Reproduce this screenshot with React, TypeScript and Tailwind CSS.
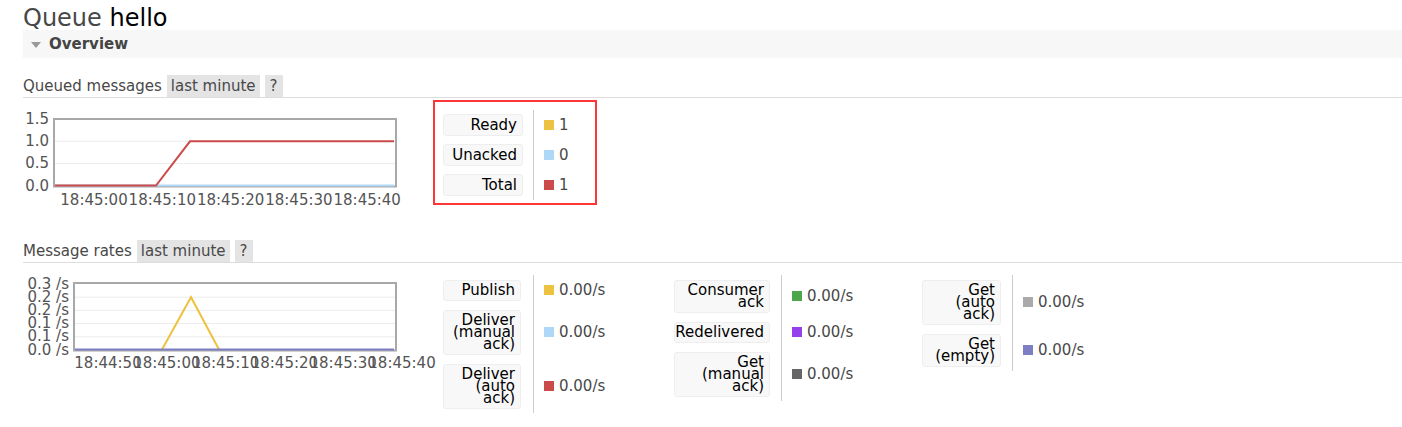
import React from 'react';

const FONT = "font-['DejaVu_Sans',Verdana,sans-serif]";

type Row = { label: React.ReactNode; h: string; color: string; value: string };

const LegendLabel: React.FC<{ w: string; h: string; children: React.ReactNode }> = ({ w, h, children }) => (
  <div className={`${w} ${h} flex flex-col justify-center rounded-[3px] border border-[#eeeeee] bg-[#f8f8f8] pr-[5px] text-right text-[15px] leading-[12px] text-black`}>
    <div>{children}</div>
  </div>
);

const Value: React.FC<{ color: string; value: string }> = ({ color, value }) => (
  <div className="flex items-center gap-[5px] border-l border-[#cccccc] pl-[10px] text-[15px] text-[#484848]">
    <span className="h-[10px] w-[10px] shrink-0" style={{ backgroundColor: color }} />
    <span>{value}</span>
  </div>
);

const LegendColumn: React.FC<{ rows: Row[]; w: string; pl: string; pr: string }> = ({ rows, w, pl, pr }) => (
  <div className="grid grid-cols-[auto_130px]">
    {rows.map((r, i) => (
      <React.Fragment key={i}>
        <div className={`${pl} ${pr} py-[4.5px]`}>
          <LegendLabel w={w} h={r.h}>{r.label}</LegendLabel>
        </div>
        <Value color={r.color} value={r.value} />
      </React.Fragment>
    ))}
  </div>
);

const Heading: React.FC<{ title: string; className: string }> = ({ title, className }) => (
  <div className={`flex items-end border-b border-[#dddddd] text-[15px] text-[#484848] ${className}`}>
    <span className="pr-[5px] leading-[22px]">{title}</span>
    <span className="bg-[#e4e4e4] px-[4px] leading-[22px]">last minute</span>
    <span className="ml-[5px] bg-[#e4e4e4] px-[5px] leading-[22px]">?</span>
  </div>
);

const QueuedChart: React.FC = () => {
  const yTicks = [
    { t: '1.5', y: 12 },
    { t: '1.0', y: 34.3 },
    { t: '0.5', y: 56.7 },
    { t: '0.0', y: 79 },
  ];
  const xTicks = ['18:45:00', '18:45:10', '18:45:20', '18:45:30', '18:45:40'];
  return (
    <svg width="410" height="100" className="mt-[9px] shrink-0 overflow-visible">
      {yTicks.slice(1, 3).map((t) => (
        <line key={t.t} x1="31" x2="372" y1={t.y} y2={t.y} stroke="#ececec" strokeWidth="1" />
      ))}
      <rect x="31" y="12" width="342" height="67.5" fill="none" stroke="#a8a8a8" strokeWidth="2" />
      {yTicks.map((t) => (
        <text key={t.t} x="26" y={t.y} textAnchor="end" dominantBaseline="middle" fontSize="15" fill="#545454" fontFamily="DejaVu Sans, sans-serif">
          {t.t}
        </text>
      ))}
      <polyline points="32,78.5 371,78.5" fill="none" stroke="#afd8f8" strokeWidth="2" />
      <polyline points="32,78.5 133,78.5 167,34.3 371,34.3" fill="none" stroke="#cb4b4b" strokeWidth="2" />
      {xTicks.map((t, i) => (
        <text key={t} x={71 + i * 68.3} y="93" textAnchor="middle" dominantBaseline="middle" fontSize="15" fill="#545454" fontFamily="DejaVu Sans, sans-serif">
          {t}
        </text>
      ))}
    </svg>
  );
};

const RatesChart: React.FC = () => {
  const yTicks = ['0.3 /s', '0.2 /s', '0.2 /s', '0.1 /s', '0.1 /s', '0.0 /s'];
  const xTicks = ['18:44:50', '18:45:00', '18:45:10', '18:45:20', '18:45:30', '18:45:40'];
  return (
    <svg width="410" height="100" className="mt-[10px] shrink-0 overflow-visible">
      {yTicks.map((_, i) =>
        i > 0 && i < 5 ? (
          <line key={i} x1="51" x2="372" y1={11 + i * 13.2} y2={11 + i * 13.2} stroke="#ececec" strokeWidth="1" />
        ) : null
      )}
      <rect x="51" y="10" width="322" height="67.5" fill="none" stroke="#a8a8a8" strokeWidth="2" />
      {yTicks.map((t, i) => (
        <text key={i} x="46" y={11 + i * 13.2} textAnchor="end" dominantBaseline="middle" fontSize="15" fill="#545454" fontFamily="DejaVu Sans, sans-serif">
          {t}
        </text>
      ))}
      <polyline points="139,76.5 168,24.2 196,76.5" fill="none" stroke="#edc240" strokeWidth="2" />
      <polyline points="52,76.5 371,76.5" fill="none" stroke="#7e7ec4" strokeWidth="2" />
      {xTicks.map((t, i) => (
        <text key={i} x={85 + i * 58.8} y="90" textAnchor="middle" dominantBaseline="middle" fontSize="15" fill="#545454" fontFamily="DejaVu Sans, sans-serif">
          {t}
        </text>
      ))}
    </svg>
  );
};

export default function App() {
  const queued = [
    { label: 'Ready', color: '#edc240', value: '1' },
    { label: 'Unacked', color: '#afd8f8', value: '0' },
    { label: 'Total', color: '#cb4b4b', value: '1' },
  ];

  const col1: Row[] = [
    { label: 'Publish', h: 'h-[21px]', color: '#edc240', value: '0.00/s' },
    { label: <>Deliver<br />(manual<br />ack)</>, h: 'h-[45px]', color: '#afd8f8', value: '0.00/s' },
    { label: <>Deliver<br />(auto<br />ack)</>, h: 'h-[45px]', color: '#cb4b4b', value: '0.00/s' },
  ];
  const col2: Row[] = [
    { label: <>Consumer<br />ack</>, h: 'h-[33px]', color: '#4da74d', value: '0.00/s' },
    { label: 'Redelivered', h: 'h-[21px]', color: '#9440ed', value: '0.00/s' },
    { label: <>Get<br />(manual<br />ack)</>, h: 'h-[45px]', color: '#666666', value: '0.00/s' },
  ];
  const col3: Row[] = [
    { label: <>Get<br />(auto<br />ack)</>, h: 'h-[45px]', color: '#aaaaaa', value: '0.00/s' },
    { label: <>Get<br />(empty)</>, h: 'h-[33px]', color: '#7e7ec4', value: '0.00/s' },
  ];

  return (
    <div className={`min-h-[427px] w-full bg-white pl-[23px] text-[#484848] ${FONT}`}>
      <h1 className="h-[30px] pt-[4px] text-[24px] leading-[28px] font-normal text-[#484848]">
        Queue <span className="text-black">hello</span>
      </h1>

      <div className="flex h-[28px] items-center gap-[8px] bg-[#f7f7f7] pl-[8px]">
        <svg width="10" height="6" viewBox="0 0 10 6" className="mt-[1px]">
          <polygon points="0,0 10,0 5,6" fill="#999999" />
        </svg>
        <span className="mt-[1px] text-[15px] font-bold text-[#444444]">Overview</span>
      </div>

      <Heading title="Queued messages" className="mt-[17px]" />

      <div className="flex items-start">
        <QueuedChart />
        <div className="mt-[2px] w-[164px] border-2 border-[#ff3636] pt-[8px] pb-[3px] pl-[8px]">
          <div className="grid grid-cols-[auto_1fr]">
            {queued.map((r) => (
              <React.Fragment key={r.label}>
                <div className="py-[4px] pr-[10px]">
                  <div className="flex h-[22px] w-[80px] items-center justify-end rounded-[3px] border border-[#eeeeee] bg-[#f8f8f8] pr-[5px] text-[15px] text-black">
                    {r.label}
                  </div>
                </div>
                <Value color={r.color} value={r.value} />
              </React.Fragment>
            ))}
          </div>
        </div>
      </div>

      <Heading title="Message rates" className="mt-[33px]" />

      <div className="flex items-start">
        <RatesChart />
        <div className="mt-[12px] flex items-start">
          <LegendColumn rows={col1} w="w-[78px]" pl="pl-[10px]" pr="pr-[12px]" />
          <LegendColumn rows={col2} w="w-[96px]" pl="pl-[11px]" pr="pr-[11px]" />
          <LegendColumn rows={col3} w="w-[79px]" pl="pl-[11px]" pr="pr-[11px]" />
        </div>
      </div>
    </div>
  );
}
